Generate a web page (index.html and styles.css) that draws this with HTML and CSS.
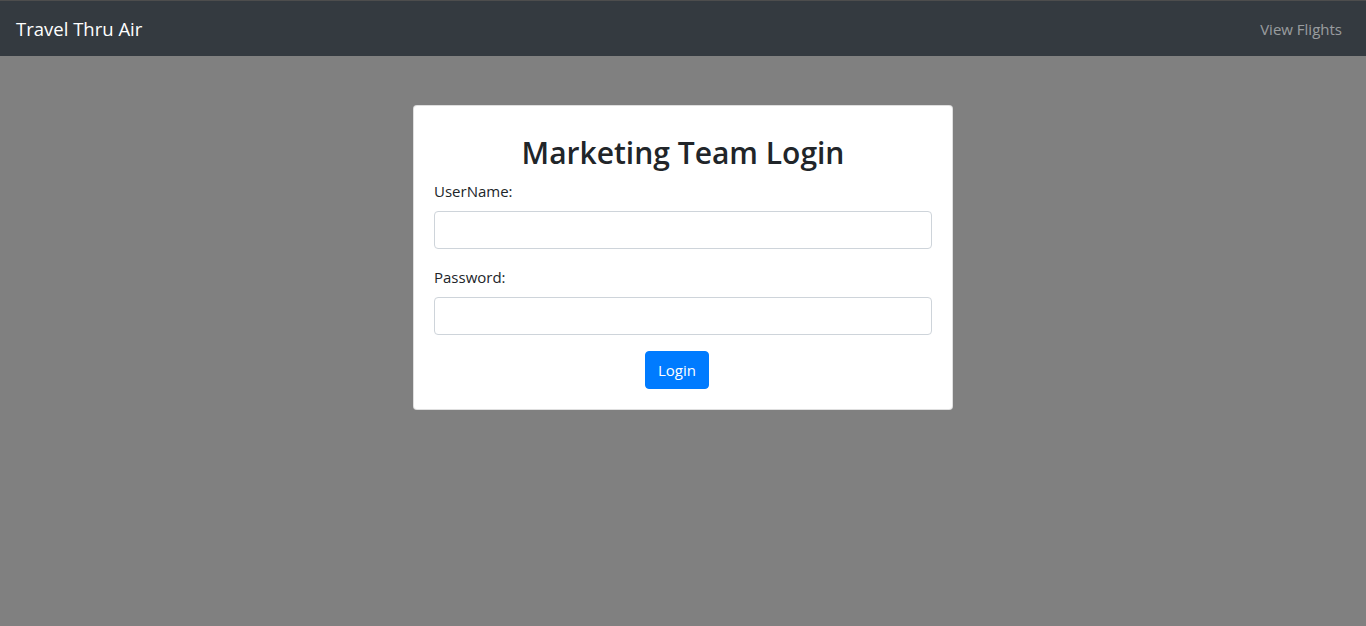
FILE: index.html
```html
<!DOCTYPE html>
<html lang="en">
<head>
<meta charset="utf-8">
<title>Marketing Team Login</title>
<link rel="stylesheet" href="styles.css">
</head>
<body>
<nav class="navbar">
  <a class="brand" href="#">Travel Thru Air</a>
  <a class="nav-link" href="#">View Flights</a>
</nav>
<main class="page">
  <div class="card">
    <h1 class="title">Marketing Team Login</h1>
    <form class="form">
      <div class="form-group">
        <label class="label" for="user">UserName:</label>
        <input class="input" id="user" type="text">
      </div>
      <div class="form-group">
        <label class="label" for="pass">Password:</label>
        <input class="input" id="pass" type="password">
      </div>
      <div class="actions">
        <button class="btn" type="button">Login</button>
      </div>
    </form>
  </div>
</main>
</body>
</html>
```
FILE: styles.css
```css
* { box-sizing: border-box; }
html, body { margin: 0; padding: 0; height: 100%; }
body {
  background: #808080;
  font-family: "Open Sans", "Noto Sans", "Liberation Sans", sans-serif;
  font-size: 16px;
  line-height: 1.5;
  color: #212529;
  border-top: 1px solid #4d4d4d;
}
.navbar {
  height: 55px;
  background: #343a40;
  display: flex;
  align-items: center;
  justify-content: space-between;
  padding: 1px 16px 0;
}
.brand {
  color: #fff;
  font-size: 18.5px;
  text-decoration: none;
  line-height: 30px;
}
.nav-link {
  color: rgba(255,255,255,.5);
  text-decoration: none;
  font-size: 15px;
  padding: 0 8px;
}
.page {
  display: flex;
  justify-content: center;
  padding-top: 49px;
}
.card {
  width: 540px;
  background: #fff;
  border: 1px solid rgba(0,0,0,.125);
  border-radius: 4px;
  padding: 20px;
}
.title {
  margin: 0 0 8px;
  height: 45px;
  padding-top: 4px;
  line-height: 45px;
  text-align: center;
  font-size: 30px;
  font-weight: 600;
  color: #212529;
}
.form-group { margin-bottom: 16px; }
.label {
  display: block;
  font-size: 15px;
  line-height: 24px;
  margin-bottom: 8px;
}
.input {
  display: block;
  width: 100%;
  height: 38px;
  border: 1px solid #ced4da;
  border-radius: 4px;
  padding: 6px 12px;
  font: inherit;
}
.actions {
  display: flex;
  justify-content: center;
}
.btn {
  height: 38px;
  background: #007bff;
  color: #fff;
  border: 1px solid #007bff;
  border-radius: 4px;
  padding: 0 12px;
  font: inherit;
  font-size: 15px;
  margin-right: 12px;
}
```
